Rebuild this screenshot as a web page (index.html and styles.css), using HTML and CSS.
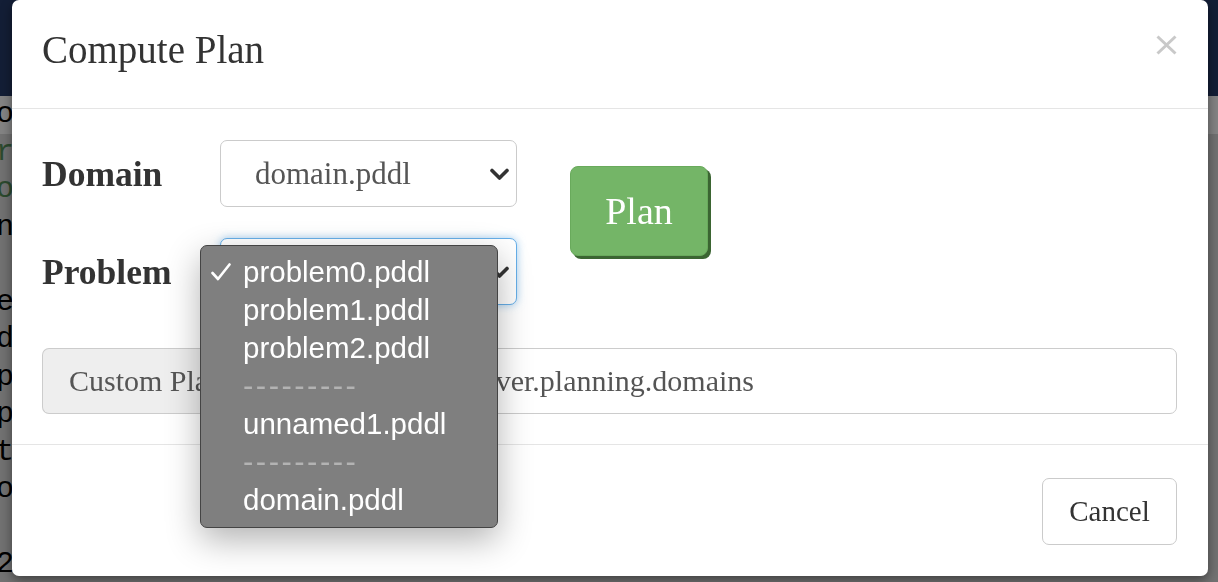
FILE: index.html
```html
<!DOCTYPE html>
<html>
<head>
<meta charset="utf-8">
<link rel="stylesheet" href="styles.css">
</head>
<body>
<div class="page">
  <div class="topbar"></div>
  <pre class="editor"><span class="line active">objects a b c d)</span><span class="line kw">robot r1 r2)</span><span class="line kw">obj o1 o2)</span><span class="line">next p1 p2)</span><span class="line"> </span><span class="line">empty p3)</span><span class="line">dest p4)</span><span class="line">pos p1)</span><span class="line">pos p2)</span><span class="line">target c)</span><span class="line">on c d)</span><span class="line"> </span><span class="line">2   meat</span></pre>
</div>

<div class="modal">
  <div class="modal-header">
    <h4 class="modal-title">Compute Plan</h4>
    <button class="close" type="button" aria-label="Close">
      <svg width="21" height="20" viewBox="0 0 21 20"><path d="M1.5 1.5 L19.5 18.5 M19.5 1.5 L1.5 18.5" stroke="#c9c9c9" stroke-width="3" fill="none"/></svg>
    </button>
  </div>
  <div class="modal-body">
    <div class="plan-row">
      <div class="fields">
        <div class="field">
          <label class="field-label">Domain</label>
          <div class="select">
            <span>domain.pddl</span>
            <svg class="chev" width="19" height="13" viewBox="0 0 19 13"><path d="M2 2.5 L9.5 10 L17 2.5" stroke="#333" stroke-width="3.6" fill="none" stroke-linecap="round" stroke-linejoin="round"/></svg>
          </div>
        </div>
        <div class="field">
          <label class="field-label">Problem</label>
          <div class="select focused">
            <span>problem0.pddl</span>
            <svg class="chev" width="19" height="13" viewBox="0 0 19 13"><path d="M2 2.5 L9.5 10 L17 2.5" stroke="#333" stroke-width="3.6" fill="none" stroke-linecap="round" stroke-linejoin="round"/></svg>
            <ul class="dropdown">
              <li class="opt checked"><svg class="check" width="20" height="18" viewBox="0 0 20 18"><path d="M1.5 10 L7 16 L18.5 1.5" stroke="#fff" stroke-width="2.6" fill="none" stroke-linecap="round" stroke-linejoin="round"/></svg>problem0.pddl</li>
              <li class="opt">problem1.pddl</li>
              <li class="opt">problem2.pddl</li>
              <li class="opt sep">---------</li>
              <li class="opt">unnamed1.pddl</li>
              <li class="opt sep">---------</li>
              <li class="opt">domain.pddl</li>
            </ul>
          </div>
        </div>
      </div>
      <button class="plan" type="button">Plan</button>
    </div>
    <div class="input-group">
      <span class="addon">Custom Planner URL</span>
      <div class="input">http://solver.planning.domains</div>
    </div>
  </div>
  <div class="modal-footer">
    <button class="cancel" type="button">Cancel</button>
  </div>
</div>
</body>
</html>
```

FILE: styles.css
```css
html, body {
  margin: 0;
  padding: 0;
  width: 1218px;
  height: 582px;
  overflow: hidden;
  background: #707070;
}

.page {
  width: 1218px;
  height: 582px;
  display: flex;
  flex-direction: column;
  overflow: hidden;
}

.topbar {
  height: 96px;
  background: #131e36;
  flex: none;
}

.editor {
  margin: 0 0 0 -4px;
  padding: 0;
  font-family: "Liberation Mono", "DejaVu Sans Mono", monospace;
  font-size: 30px;
  line-height: 37.5px;
  color: #000;
  background: #727272;
  flex: 1;
  overflow: hidden;
}

.line {
  display: block;
  height: 37.5px;
}

.line.active {
  background: #848484;
}

.line.kw {
  color: #2c4a2e;
}

.modal {
  position: fixed;
  left: 12px;
  top: 0;
  width: 1196px;
  height: 576px;
  background: #fff;
  border-radius: 7px;
  box-shadow: 0 4px 12px rgba(0, 0, 0, 0.45);
  display: flex;
  flex-direction: column;
  font-family: "Liberation Serif", "DejaVu Serif", serif;
  color: #333;
}

.modal-header {
  height: 109px;
  box-sizing: border-box;
  border-bottom: 1px solid #e5e5e5;
  padding: 28px 31px 0 30px;
  display: flex;
  justify-content: space-between;
  align-items: flex-start;
  flex: none;
}

.modal-title {
  margin: 0;
  font-size: 39px;
  line-height: 43px;
  font-weight: normal;
  color: #333;
}

.close {
  margin-top: 7px;
  padding: 0;
  border: 0;
  background: none;
  width: 21px;
  height: 20px;
  display: block;
}

.close svg {
  display: block;
}

.modal-body {
  padding: 31px 31px 31px 30px;
  height: 336px;
  box-sizing: border-box;
  border-bottom: 1px solid #e5e5e5;
  flex: none;
}

.plan-row {
  display: flex;
  align-items: flex-start;
}

.fields {
  display: flex;
  flex-direction: column;
  gap: 31px;
}

.field {
  display: flex;
  align-items: center;
}

.field-label {
  width: 178px;
  font-size: 35.5px;
  font-weight: bold;
  color: #333;
}

.select {
  position: relative;
  width: 297px;
  height: 67px;
  box-sizing: border-box;
  border: 1px solid #cbcbcb;
  border-radius: 7px;
  padding: 0 7px 0 34px;
  display: flex;
  align-items: center;
  justify-content: space-between;
  font-size: 31px;
  color: #555;
  background: #fff;
}

.select .chev {
  display: block;
  margin-top: 2px;
}

.select.focused {
  border-color: #66afe9;
  box-shadow: 0 0 8px rgba(102, 175, 233, 0.6);
}

.dropdown {
  position: absolute;
  left: -21px;
  top: 6px;
  width: 298px;
  height: 283px;
  box-sizing: border-box;
  margin: 0;
  padding: 7px 0 10px 0;
  list-style: none;
  background: #7f7f7f;
  border: 1px solid #444;
  border-radius: 7px;
  box-shadow: 0 12px 34px rgba(0, 0, 0, 0.3);
  font-family: "Liberation Sans", Arial, sans-serif;
  font-size: 29.5px;
  color: #fff;
  z-index: 5;
}

.opt {
  position: relative;
  height: 38px;
  line-height: 38px;
  padding-left: 42px;
  white-space: nowrap;
}

.opt .check {
  position: absolute;
  left: 10px;
  top: 10px;
}

.opt.sep {
  color: #b3b3b3;
  letter-spacing: 2.5px;
  font-size: 31px;
}

.plan {
  margin-left: 53px;
  margin-top: 26px;
  width: 138px;
  height: 90px;
  box-sizing: border-box;
  border: 1px solid #69aa5c;
  border-radius: 8px;
  background: #74b567;
  box-shadow: 3px 3px 0 #3b6532;
  color: #fff;
  font-family: "Liberation Serif", "DejaVu Serif", serif;
  font-size: 38px;
  padding: 0;
}

.input-group {
  margin-top: 43px;
  display: flex;
  height: 66px;
  width: 1135px;
  box-sizing: border-box;
  font-size: 30px;
  color: #555;
}

.addon {
  display: flex;
  align-items: center;
  padding: 0 41px 0 26px;
  background: #eee;
  border: 1px solid #ccc;
  border-right: 0;
  border-radius: 7px 0 0 7px;
}

.input {
  flex: 1;
  display: flex;
  align-items: center;
  padding: 0 18px;
  border: 1px solid #ccc;
  border-radius: 0 7px 7px 0;
}

.modal-footer {
  flex: 1;
  padding: 33px 31px 31px;
  display: flex;
  justify-content: flex-end;
  align-items: flex-start;
}

.cancel {
  width: 135px;
  height: 67px;
  box-sizing: border-box;
  border: 1px solid #cbcbcb;
  border-radius: 7px;
  background: #fff;
  font-family: "Liberation Serif", "DejaVu Serif", serif;
  font-size: 29px;
  color: #333;
  padding: 0;
}
```
